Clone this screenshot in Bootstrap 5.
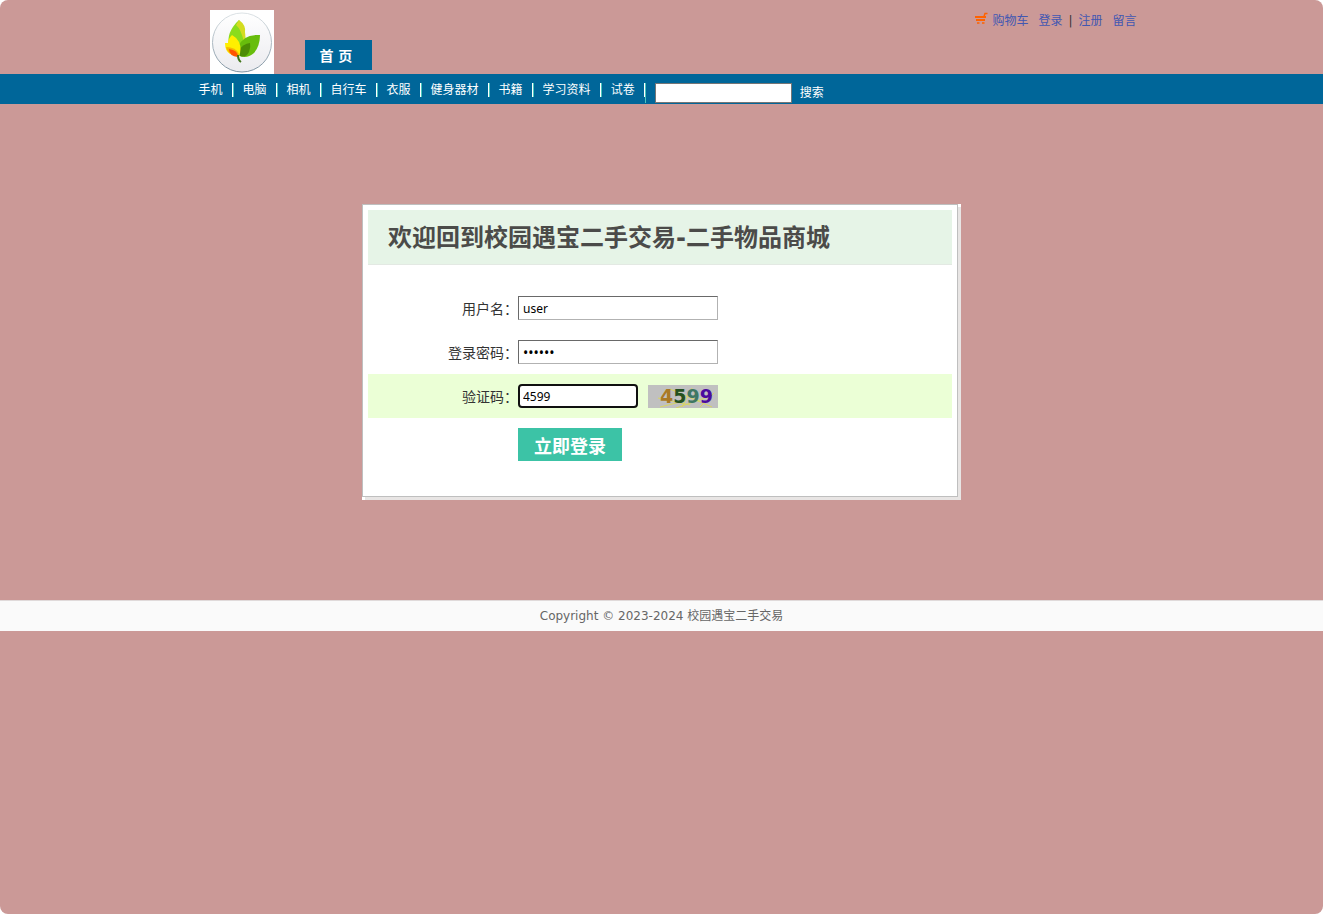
<!DOCTYPE html>
<html lang="zh-CN">
<head>
<meta charset="utf-8">
<meta name="viewport" content="width=device-width, initial-scale=1">
<title>校园遇宝二手交易</title>
<link href="https://cdn.jsdelivr.net/npm/bootstrap@5.3.0/dist/css/bootstrap.min.css" rel="stylesheet">
<style>
html { background: #fff; }
body { background: #cb9997; border-radius: 8px; font: 12px/18px "DejaVu Sans", "Noto Sans CJK SC", sans-serif; color: #333; }
.shop-wrap { max-width: 950px; }
.logo-box { width: 64px; margin: 10px 31px 0 23px; background: #fff; }
.home-tab { background: #069; color: #fff; font: bold 14px/30px "DejaVu Sans", "Noto Sans CJK SC", sans-serif; padding: 1px 20px 0 15px; height: 30px; margin-bottom: 4px; }
.user-links { gap: 10px; padding-top: 12px; }
.user-links a { color: #4257b2; }
.user-links .sep { margin: 0 -4px 0 -4px; }
.cate-bar { background: #069; height: 30px; }
.cate-list { margin-left: 3px; padding-top: 9px; }
.cate-list a { color: #fff; padding: 0 9px; height: 14px; line-height: 14px; border-right: 1px solid #fff; box-shadow: 1px 0 #4cc5bd; margin-right: 1px; }
.search-form { margin: 9px 0 0 -1px; border-left: 1px solid #4cc5bd; }
.search-box { width: 137px; height: 20px; border: 1px solid #767676; padding: 1px 2px; margin: 0 8px 0 9px; }
.search-btn { color: #fff; }
.login-shell { max-width: 599px; margin: 100px auto; background: #fff; padding: 0 3px 3px 0; }
.login-panel { border: 1px solid #bfbfbf; padding: 5px 5px 35px; box-shadow: 3px 3px #e8e5e4; background: #fff; }
.login-title { background: #e6f4e7; border-bottom: 1px solid #e3e9e3; color: #4b4b49; font: bold 24px/52px "DejaVu Sans", "Noto Sans CJK SC", sans-serif; padding: 2px 0 0 20px; margin-bottom: 21px; }
.form-line { height: 44px; }
.form-line label { width: 150px; font-size: 14px; text-align: right; flex: none; padding-top: 2px; }
.form-line input { width: 200px; height: 24px; border: 1px solid #b2b2b2; border-top-color: #696969; border-left-color: #696969; padding: 2px 4px; font: 12px/18px "Noto Sans", sans-serif; color: #000; outline: none; }
.form-line input[type="password"] { font-size: 14px; }
.form-line input.code-box { width: 120px; border: 2px solid #101010; border-radius: 4px; padding: 0 3px; background: #fff; margin-right: 10px; }
.code-line { background: #ebffd6; }
.login-btn { background: #3cc3a6; color: #fff; font: bold 18px/32px "Noto Sans CJK SC", sans-serif; width: 104px; height: 33px; padding-top: 1px; margin: 10px 0 0 150px; }
.site-foot { background: #fafafa; border-top: 1px solid #e0dada; color: #666; line-height: 30px; }
</style>
</head>
<body class="min-vh-100">
<header class="shop-wrap mx-auto d-flex">
  <a href="#" class="logo-box" aria-label="校园遇宝">
    <svg class="d-block" width="64" height="64" viewBox="0 0 64 64">
      <defs><linearGradient id="disc" x2="0" y2="1"><stop stop-color="#fff"/><stop offset="1" stop-color="#ebebef"/></linearGradient>
      <linearGradient id="ring" x2="0" y2="1"><stop stop-color="#dce2e5"/><stop offset="1" stop-color="#7e92a0"/></linearGradient></defs>
      <circle cx="32" cy="32.500" r="29.500" fill="url(#disc)" stroke="url(#ring)"/>
      <path d="M29 10Q16 22 19 36L30 46Q38 34 34 20Z" fill="#8bdc1c"/>
      <path d="M29 10Q36 15 35 22Q36 28 34 32Q31 19 26 15Z" fill="#d3dc20"/>
      <path d="M50 25Q33 24 28 37Q27 44 30 46Q37 49 44 43Q50 36 50 25Z" fill="#68bd0c"/>
      <path d="M40 33Q33 34 29 40L30 46Q36 48 39 42Q41 37 40 33Z" fill="#4c8c05"/>
      <path d="M22 25Q18 29 18 33L15 33Q15 41 20 44L29 46Q32 39 29 32Q26 27 22 25Z" fill="#ffef00"/>
      <path d="M16 37Q17 44 28 47L29 44Q26 37 16 37Z" fill="#f6b800"/>
      <path d="M19 39Q19 46 28 47Q28 40 19 39Z" fill="#ff5400"/>
      <path d="M28 45Q28 50 31 52" fill="none" stroke="#41751b" stroke-width="2"/>
    </svg>
  </a>
  <a href="#" class="home-tab align-self-end text-decoration-none">首 页</a>
  <nav class="user-links d-flex ms-auto align-self-start" aria-label="用户">
    <a href="#" class="text-decoration-none d-flex gap-1"><svg width="14" height="14" viewBox="0 0 14 14" class="flex-shrink-0"><g stroke="#ff6200" fill="none"><path d="M13.500 1.500H11L9.500 6" stroke-width="1.500"/><path d="M1 5H12" stroke-width="2"/><path d="M2 8H11" stroke-width="2"/><path d="M3 11h2.500M8 11h2.500" stroke-width="1.500"/></g></svg>购物车</a>
    <a href="#" class="text-decoration-none">登录</a><span class="sep">|</span>
    <a href="#" class="text-decoration-none">注册</a>
    <a href="#" class="text-decoration-none">留言</a>
  </nav>
</header>
<div class="cate-bar">
  <div class="shop-wrap mx-auto d-flex align-items-start">
    <nav class="cate-list d-flex" aria-label="分类">
      <a href="#" class="text-decoration-none">手机</a><a href="#" class="text-decoration-none">电脑</a><a href="#" class="text-decoration-none">相机</a><a href="#" class="text-decoration-none">自行车</a><a href="#" class="text-decoration-none">衣服</a><a href="#" class="text-decoration-none">健身器材</a><a href="#" class="text-decoration-none">书籍</a><a href="#" class="text-decoration-none">学习资料</a><a href="#" class="text-decoration-none">试卷</a>
    </nav>
    <form class="search-form d-flex"><input type="text" class="search-box" aria-label="搜索商品"><button type="button" class="search-btn border-0 bg-transparent p-0">搜索</button></form>
  </div>
</div>
<main class="login-shell">
  <form class="login-panel">
    <h1 class="login-title">欢迎回到校园遇宝二手交易-二手物品商城</h1>
    <div class="form-line d-flex align-items-center"><label for="user">用户名：</label><input id="user" type="text" value="user"></div>
    <div class="form-line d-flex align-items-center"><label for="pwd">登录密码：</label><input id="pwd" type="password" value="123456"></div>
    <div class="form-line code-line d-flex align-items-center"><label for="code">验证码：</label><input id="code" class="code-box" type="text" value="4599">
      <svg width="70" height="23" viewBox="0 0 70 23" role="img" aria-label="验证码图片">
        <rect width="70" height="23" fill="#c0c0c0"/>
        <path d="M10 13L42 20M22 4L64 22M44 3L34 22M28 23L60 12M52 22L66 8M12 22L32 17" stroke="#d9d660" fill="none"/>
        <text x="12" y="18" font-family="DejaVu Sans" font-weight="bold" font-size="19"><tspan fill="#aa7924">4</tspan><tspan fill="#24501f">5</tspan><tspan fill="#3f7764">9</tspan><tspan fill="#4b0b9e">9</tspan></text>
      </svg>
    </div>
    <button type="button" class="login-btn d-block border-0 px-0 pb-0">立即登录</button>
  </form>
</main>
<footer class="site-foot text-center">Copyright © 2023-2024 校园遇宝二手交易</footer>
</body>
</html>
